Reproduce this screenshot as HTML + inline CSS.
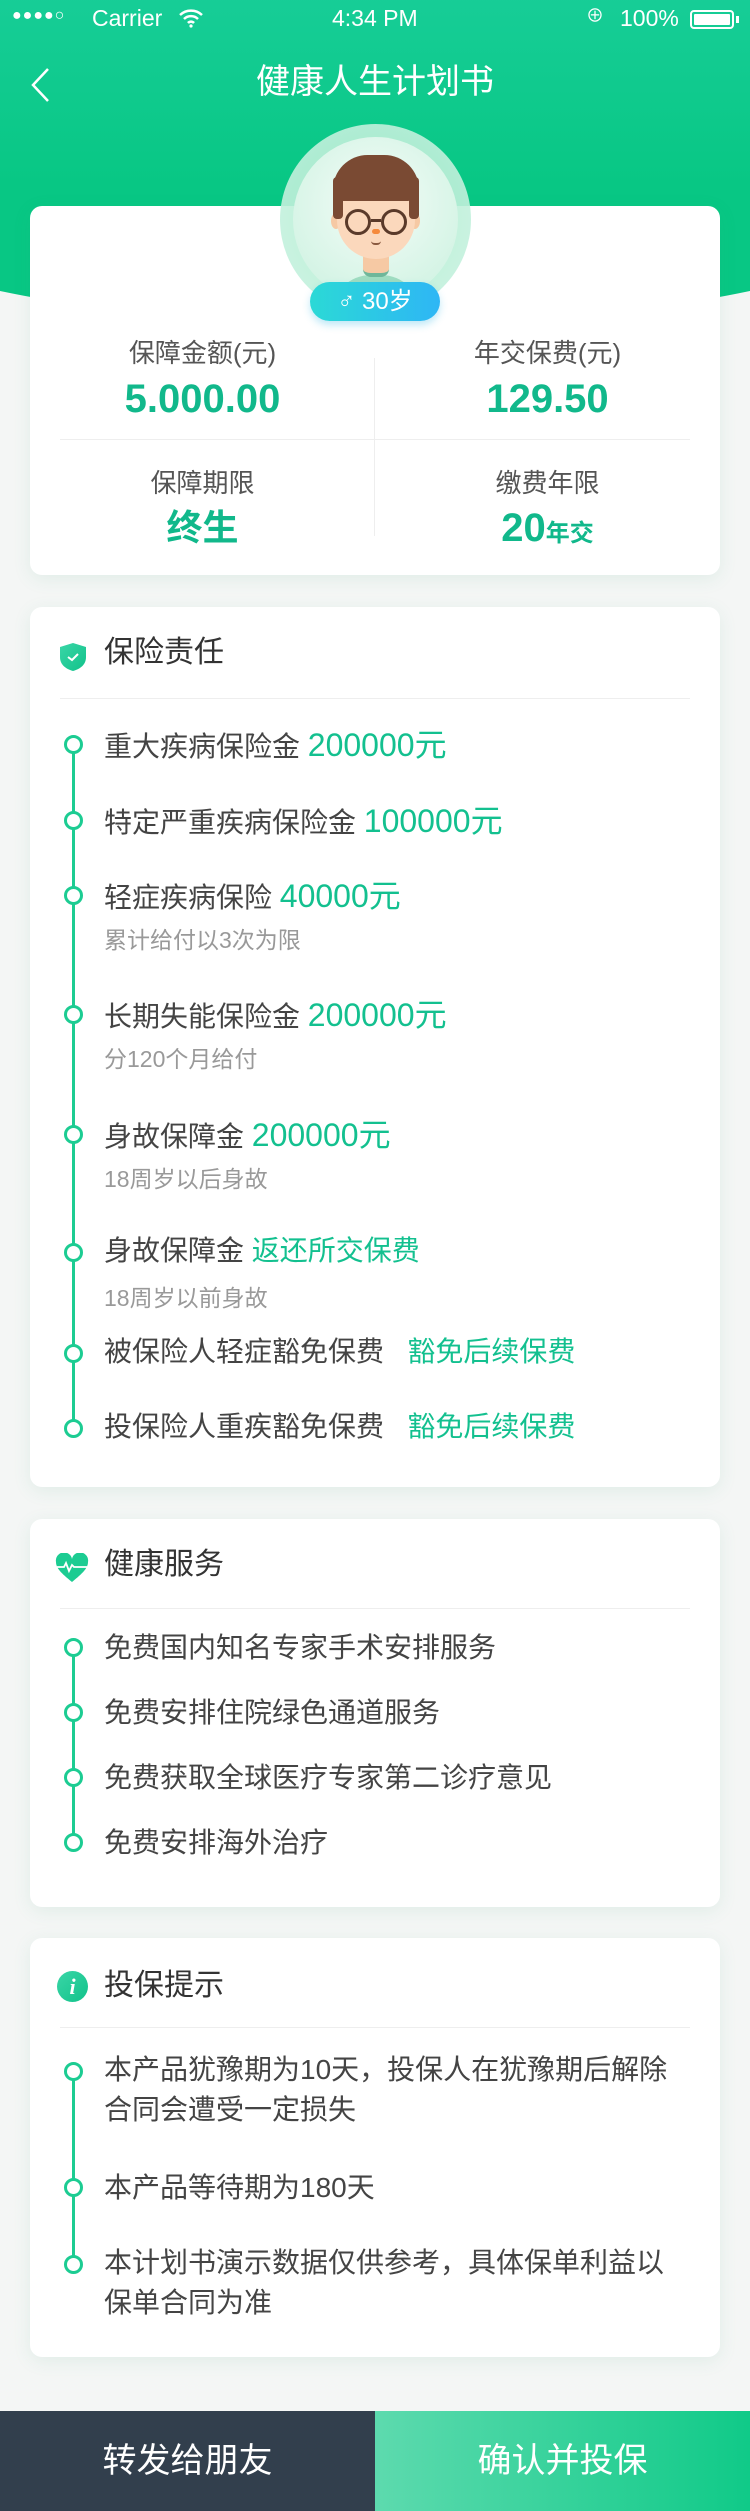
<!DOCTYPE html>
<html><head><meta charset="utf-8">
<style>
*{margin:0;padding:0;box-sizing:border-box}
body{width:750px;height:2511px;background:#f4f6f5;font-family:"Liberation Sans","Noto Sans CJK SC",sans-serif;position:relative;overflow:hidden;color:#333}
.abs{position:absolute}
.hdr{left:-150px;top:-600px;width:1050px;height:924px;border-radius:0 0 50% 50%/0 0 110px 110px;background:linear-gradient(#1ed0a0 55%,#08c784 85%)}
.card{position:absolute;left:30px;width:690px;background:#fff;border-radius:12px;box-shadow:0 4px 18px rgba(60,160,120,.10)}
.t{position:absolute;white-space:nowrap;line-height:1}
.lbl{font-size:26px;color:#555;width:345px;text-align:center}
.val{font-size:40px;font-weight:bold;color:#11b88b;width:345px;text-align:center}
.ttl{font-size:30px;color:#333;left:74px}
.div{position:absolute;left:30px;right:30px;height:1px;background:#eee}
.vl{position:absolute;left:42px;width:3px;background:#1ccc92}
.dot{position:absolute;left:34px;width:19px;height:19px;border:3px solid #1ccc92;border-radius:50%;background:#fff}
.it{position:absolute;left:74px;font-size:28px;color:#444;white-space:nowrap;line-height:1}
.it b{font-weight:normal;color:#13c08f;font-size:32px}
.sub{position:absolute;left:74px;font-size:23px;color:#999;white-space:nowrap;line-height:1}
</style></head><body>
<div class="abs hdr"></div>
<!-- status bar -->
<div class="t" style="left:12px;top:8px;color:#fff;font-size:16px;letter-spacing:1px">●●●●○</div>
<div class="t" style="left:92px;top:7px;color:#fff;font-size:23px">Carrier</div>
<svg class="abs" style="left:178px;top:8px" width="26" height="20" viewBox="0 0 26 20"><path d="M2 7a16 16 0 0 1 22 0M6 11a10 10 0 0 1 14 0M10 15a4 4 0 0 1 6 0" stroke="#fff" stroke-width="2.5" fill="none"/><circle cx="13" cy="18" r="1.6" fill="#fff"/></svg>
<div class="t" style="left:332px;top:7px;color:#fff;font-size:23px">4:34 PM</div>
<div class="t" style="left:586px;top:7px;color:#fff;font-size:18px">⊕</div>
<div class="t" style="left:620px;top:7px;color:#fff;font-size:23px">100%</div>
<div class="abs" style="left:690px;top:10px;width:44px;height:19px;border:2px solid #fff;border-radius:4px;padding:2px"><div style="background:#fff;width:100%;height:100%;border-radius:1px"></div></div>
<div class="abs" style="left:736px;top:16px;width:3px;height:7px;background:#fff"></div>
<!-- nav -->
<svg class="abs" style="left:28px;top:66px" width="24" height="38"><path d="M20 3L5 19l15 16" stroke="#fff" stroke-width="2.5" fill="none"/></svg>
<div class="t" style="left:0;width:750px;text-align:center;top:65px;color:#fff;font-size:34px">健康人生计划书</div>

<!-- summary card -->
<div class="card" style="top:206px;height:369px">
  <div class="t lbl" style="left:0;top:134px">保障金额(元)</div>
  <div class="t val" style="left:0;top:173px">5.000.00</div>
  <div class="t lbl" style="left:345px;top:134px">年交保费(元)</div>
  <div class="t val" style="left:345px;top:173px">129.50</div>
  <div class="div" style="top:233px"></div>
  <div class="abs" style="left:344px;top:152px;width:1px;height:178px;background:#eee"></div>
  <div class="t lbl" style="left:0;top:264px">保障期限</div>
  <div class="t val" style="left:0;top:304px;font-size:36px">终生</div>
  <div class="t lbl" style="left:345px;top:264px">缴费年限</div>
  <div class="t val" style="left:345px;top:302px">20<span style="font-size:24px">年交</span></div>
</div>
<!-- avatar -->
<div class="abs" style="left:280px;top:124px;width:191px;height:191px;border-radius:50%;background:radial-gradient(circle,#bff0da 60%,#cdf3e3 100%);opacity:.9"></div>
<div class="abs" style="left:293px;top:137px;width:165px;height:165px;border-radius:50%;background:radial-gradient(circle at 50% 40%,#f4fcf8,#c9f1de);overflow:hidden">
  <div class="abs" style="left:38px;top:138px;width:90px;height:40px;border-radius:45px 45px 0 0;background:#9fdcc0"></div>
  <div class="abs" style="left:70px;top:112px;width:26px;height:28px;background:#f6c9a4;border-radius:0 0 8px 8px;border-bottom:4px solid #6fb79a"></div>
  <div class="abs" style="left:38px;top:76px;width:10px;height:16px;background:#f6c9a4;border-radius:50%"></div>
  <div class="abs" style="left:117px;top:76px;width:10px;height:16px;background:#f6c9a4;border-radius:50%"></div>
  <div class="abs" style="left:44px;top:38px;width:78px;height:84px;border-radius:34px 34px 40px 40px;background:#fbd8bc"></div>
  <div class="abs" style="left:40px;top:18px;width:86px;height:46px;border-radius:43px 43px 14px 10px;background:#7a4a33"></div>
  <div class="abs" style="left:40px;top:40px;width:10px;height:42px;background:#7a4a33;border-radius:4px"></div>
  <div class="abs" style="left:116px;top:40px;width:10px;height:42px;background:#7a4a33;border-radius:4px"></div>
  <div class="abs" style="left:52px;top:72px;width:26px;height:26px;border:3px solid #5a3a2a;border-radius:50%"></div>
  <div class="abs" style="left:88px;top:72px;width:26px;height:26px;border:3px solid #5a3a2a;border-radius:50%"></div>
  <div class="abs" style="left:78px;top:82px;width:10px;height:3px;background:#5a3a2a"></div>
  <div class="abs" style="left:79px;top:92px;width:8px;height:5px;background:#f58a3c;border-radius:3px"></div>
  <div class="abs" style="left:78px;top:104px;width:10px;height:4px;border-bottom:2px solid #8a5a40;border-radius:0 0 5px 5px"></div>
</div>
<div class="abs" style="left:310px;top:282px;width:130px;height:39px;border-radius:20px;background:linear-gradient(90deg,#2bd9d6,#2eb6f5);box-shadow:0 4px 8px rgba(40,180,230,.3);color:#fff;font-size:24px;text-align:center;line-height:39px">♂ 30岁</div>

<!-- card 1 -->
<div class="card" style="top:607px;height:880px">
  <svg class="abs" style="left:29px;top:35px" width="28" height="30" viewBox="0 0 28 30"><defs><linearGradient id="gg" x1="0" y1="0" x2="1" y2="1"><stop offset="0" stop-color="#3ad6a7"/><stop offset="1" stop-color="#11c28a"/></linearGradient></defs><path d="M14 1L27 5v10c0 8-6 12-13 14C7 27 1 23 1 15V5z" fill="url(#gg)"/><path d="M9 15l4 3 6-6" stroke="#fff" stroke-width="2" fill="none"/></svg>
  <div class="t ttl" style="top:31px">保险责任</div>
  <div class="div" style="top:91px"></div>
  <div class="vl" style="top:138px;height:683px"></div>
  <div class="dot" style="top:128px"></div><div class="it" style="top:122px">重大疾病保险金 <b>200000元</b></div>
  <div class="dot" style="top:204px"></div><div class="it" style="top:198px">特定严重疾病保险金 <b>100000元</b></div>
  <div class="dot" style="top:279px"></div><div class="it" style="top:273px">轻症疾病保险 <b>40000元</b></div>
  <div class="sub" style="top:322px">累计给付以3次为限</div>
  <div class="dot" style="top:398px"></div><div class="it" style="top:392px">长期失能保险金 <b>200000元</b></div>
  <div class="sub" style="top:441px">分120个月给付</div>
  <div class="dot" style="top:518px"></div><div class="it" style="top:512px">身故保障金 <b>200000元</b></div>
  <div class="sub" style="top:561px">18周岁以后身故</div>
  <div class="dot" style="top:636px"></div><div class="it" style="top:630px">身故保障金 <b style="font-size:28px">返还所交保费</b></div>
  <div class="sub" style="top:680px">18周岁以前身故</div>
  <div class="dot" style="top:737px"></div><div class="it" style="top:731px">被保险人轻症豁免保费&nbsp;&nbsp; <b style="font-size:28px">豁免后续保费</b></div>
  <div class="dot" style="top:812px"></div><div class="it" style="top:806px">投保险人重疾豁免保费&nbsp;&nbsp; <b style="font-size:28px">豁免后续保费</b></div>
</div>

<!-- card 2 -->
<div class="card" style="top:1519px;height:388px">
  <svg class="abs" style="left:25px;top:34px" width="34" height="30" viewBox="0 0 34 30"><path d="M17 29C6 20 1 15 1 9a8 8 0 0 1 16-3 8 8 0 0 1 16 3c0 6-5 11-16 20z" fill="#1ccc92"/><path d="M2 14h7l2-4 3 8 3-6 2 2h13" stroke="#fff" stroke-width="1.8" fill="none"/></svg>
  <div class="t ttl" style="top:31px">健康服务</div>
  <div class="div" style="top:89px"></div>
  <div class="vl" style="top:130px;height:195px"></div>
  <div class="dot" style="top:119px"></div><div class="it" style="top:115px">免费国内知名专家手术安排服务</div>
  <div class="dot" style="top:184px"></div><div class="it" style="top:180px">免费安排住院绿色通道服务</div>
  <div class="dot" style="top:249px"></div><div class="it" style="top:245px">免费获取全球医疗专家第二诊疗意见</div>
  <div class="dot" style="top:314px"></div><div class="it" style="top:310px">免费安排海外治疗</div>
</div>

<!-- card 3 -->
<div class="card" style="top:1938px;height:419px">
  <div class="abs" style="left:27px;top:33px;width:31px;height:31px;border-radius:50%;background:linear-gradient(135deg,#3ad6a7,#11c28a);color:#fff;font:italic bold 22px/31px 'Liberation Serif',serif;text-align:center">i</div>
  <div class="t ttl" style="top:33px">投保提示</div>
  <div class="div" style="top:89px"></div>
  <div class="vl" style="top:134px;height:190px"></div>
  <div class="dot" style="top:124px"></div>
  <div class="it" style="top:118px;line-height:40px;margin-top:-6px">本产品犹豫期为10天，投保人在犹豫期后解除<br>合同会遭受一定损失</div>
  <div class="dot" style="top:240px"></div><div class="it" style="top:236px">本产品等待期为180天</div>
  <div class="dot" style="top:317px"></div>
  <div class="it" style="top:311px;line-height:40px;margin-top:-6px">本计划书演示数据仅供参考，具体保单利益以<br>保单合同为准</div>
</div>

<!-- bottom bar -->
<div class="abs" style="left:0;top:2411px;width:375px;height:100px;background:#323f4d;color:#fff;font-size:34px;text-align:center;line-height:100px">转发给朋友</div>
<div class="abs" style="left:375px;top:2411px;width:375px;height:100px;background:linear-gradient(90deg,#5ddaae,#10ca88);color:#fff;font-size:34px;text-align:center;line-height:100px">确认并投保</div>
</body></html>
